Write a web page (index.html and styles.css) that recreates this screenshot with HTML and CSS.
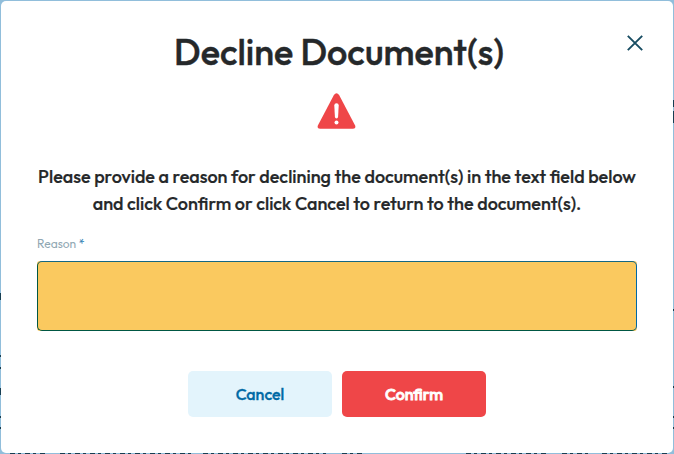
FILE: index.html
```html
<!DOCTYPE html>
<html lang="en">
<head>
<meta charset="utf-8">
<title>Decline Document(s)</title>
<link rel="stylesheet" href="styles.css">
</head>
<body>
<svg class="backdrop" width="674" height="454" aria-hidden="true">
  <path class="marks" d="M.5 293v7M.5 355v2M.5 367v2M.5 388v7M.5 416v2M.5 427v2M673.5 100v7M673.5 111v12M673.5 309v2M673.5 386v2M673.5 416v2M673.5 427v2"/>
  <path class="marks row" d="M10 453.5H48M60 453.5H193M203 453.5H326M342 453.5H364M466 453.5H548M562 453.5H588M602 453.5H669"/>
</svg>
<main class="modal">
  <button class="close" aria-label="Close">
    <svg width="16" height="16" viewBox="0 0 16 16"><path d="M.8.8 15.2 15.2M15.2.8.8 15.2"/></svg>
  </button>
  <h1>Decline Document(s)</h1>
  <svg class="warning" width="39" height="37" viewBox="0 0 39 37">
    <path class="triangle" d="M16.9 2.1Q19.5-1.6 22.1 2.1L38 32.3Q39.4 35.8 36 35.8H3Q-.4 35.8 1 32.3Z"/>
    <path class="mark" d="M17.3 12.4Q17.3 10.3 19.5 10.3Q21.7 10.3 21.7 12.4L21.1 23.8Q21 25.6 19.5 25.6Q18 25.6 17.9 23.8Z"/>
    <circle class="mark" cx="19.5" cy="29.6" r="2"/>
  </svg>
  <p class="message">Please provide a reason for declining the document(s) in the text field below<br>and click Confirm or click Cancel to return to the document(s).</p>
  <label for="reason">Reason <b>*</b></label>
  <div class="field"><textarea id="reason"></textarea></div>
  <div class="actions">
    <button class="cancel">Cancel</button>
    <button class="confirm">Confirm</button>
  </div>
</main>
</body>
</html>
```

FILE: styles.css
```css
* { box-sizing: border-box; }
body {
  margin: 0;
  padding: 1px;
  height: 454px;
  overflow: hidden;
  background: #91bedb;
  font-family: Outfit, Lato, sans-serif;
}
.backdrop { position: absolute; left: 0; top: 0; }
.marks { stroke: #173e52; stroke-width: 1; fill: none; }
.row { stroke-dasharray: 5 3 3 4; }
.modal {
  position: relative;
  display: flex;
  flex-direction: column;
  width: 672px;
  height: 452px;
  padding: 28px 36px 0;
  border-radius: 5px;
  background: #fff;
  color: #25282a;
}
button { border: 0; padding: 0; font-family: inherit; }
.close {
  position: absolute;
  top: 34px;
  right: 30px;
  width: 16px;
  height: 16px;
  background: none;
}
.close svg { display: block; }
.close path { stroke: #174c62; stroke-width: 1.9; fill: none; }
h1 {
  margin: 0 0 0 4px;
  height: 46px;
  line-height: 46px;
  font-size: 36px;
  font-weight: 500;
  text-align: center;
  white-space: nowrap;
  -webkit-text-stroke: .4px #25282a;
}
.warning { display: block; margin: 18px 0 0 280px; }
.triangle { fill: #ef4648; }
.mark { fill: #fff; }
.message {
  margin: 33px -20px 0;
  line-height: 27px;
  font-size: 18px;
  font-weight: 500;
  text-align: center;
  white-space: nowrap;
  -webkit-text-stroke: .2px #25282a;
}
label {
  margin-top: 19px;
  height: 16px;
  line-height: 16px;
  font-size: 12px;
  color: #91a8b3;
}
label b { color: #2f80b3; font-weight: 400; }
.field {
  height: 70px;
  margin-top: 9px;
  background: #fac95f;
  border-radius: 3px;
}
textarea {
  display: block;
  width: 600px;
  height: 70px;
  resize: none;
  outline: 0;
  border: 1px solid;
  border-color: #146782 #0067a5 #005743 #005743;
  border-radius: 5px;
  background: transparent;
}
.actions {
  display: flex;
  justify-content: center;
  gap: 10px;
  margin-top: 40px;
}
.actions button {
  width: 144px;
  height: 46px;
  border-radius: 5px;
  font-size: 16px;
  font-weight: 500;
}
.cancel { background: #e3f4fc; color: #0069a5; -webkit-text-stroke: .3px #0069a5; }
.confirm { background: #ef4648; color: #fff; -webkit-text-stroke: .8px #fff; }
```
